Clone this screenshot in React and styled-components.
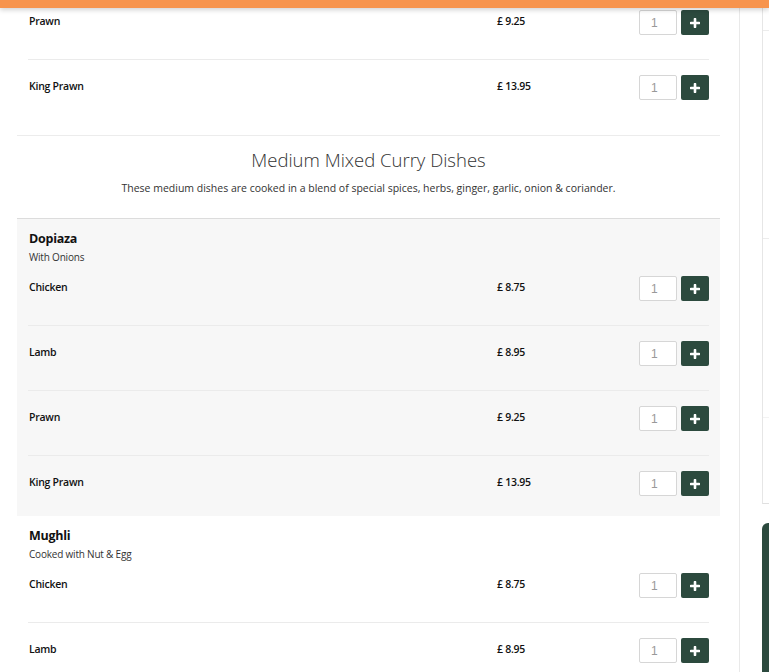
import React from "react";
import styled, { createGlobalStyle } from "styled-components";

const Global = createGlobalStyle`
  html, body { margin: 0; padding: 0; background: #fff; overflow: hidden; }
  body { font-family: "Open Sans", "Noto Sans", Arial, sans-serif; color: #222; }
  * { box-sizing: border-box; }
`;

const TopBar = styled.div`
  position: fixed;
  top: 0;
  left: 0;
  right: 0;
  height: 8px;
  background: #f7944d;
  box-shadow: 0 2px 5px rgba(0, 0, 0, 0.18);
  z-index: 10;
`;

const Page = styled.div`
  display: flex;
  width: 900px;
  height: 672px;
  overflow: hidden;
`;

const Main = styled.main`
  width: 740px;
  flex: none;
  padding: 0 19px 0 17px;
  border-right: 1px solid #e9e9e9;
`;

const Menu = styled.div`
  margin-top: -5px;
`;

const Group = styled.section`
  background: ${(p) => (p.$shaded ? "#f7f7f7" : "transparent")};
  padding: ${(p) => (p.$header ? "11px 0 1px" : "0")};
`;

const GroupTitle = styled.h3`
  margin: 0 12px;
  font-size: 12.5px;
  font-weight: 700;
  line-height: 18px;
  letter-spacing: -0.25px;
  color: #111;
`;

const GroupNote = styled.p`
  margin: 4px 12px -2px;
  font-size: 10px;
  line-height: 11px;
  letter-spacing: -0.2px;
  color: #333;
`;

const Row = styled.div`
  display: grid;
  grid-template-columns: 1fr 142px 70px;
  align-items: start;
  margin: 0 11px 0 11px;
  padding: 15px 0 19px 1px;
  & + & {
    margin-top: 5px;
    border-top: 1px solid #ebebeb;
  }
`;

const Name = styled.div`
  padding-top: 3px;
  font-size: 10.5px;
  font-weight: 600;
  line-height: 16px;
  letter-spacing: -0.25px;
  color: #111;
`;

const Price = styled(Name)``;

const Controls = styled.div`
  display: flex;
  gap: 4px;
`;

const Qty = styled.input`
  width: 38px;
  height: 25px;
  border: 1px solid #d6d6d6;
  border-radius: 2px;
  padding: 0 0 0 11px;
  font-family: "Liberation Sans", Arial, sans-serif;
  font-size: 12px;
  color: #999;
  background: #fff;
  outline: none;
`;

const AddButton = styled.button`
  width: 28px;
  height: 25px;
  border: none;
  border-radius: 2px;
  background: #2c4a3e;
  display: flex;
  align-items: center;
  justify-content: center;
  padding: 0;
  cursor: pointer;
`;

const SectionHead = styled.header`
  margin-top: 16px;
  border-top: 1px solid #ececec;
  border-bottom: 1px solid #dcdcdc;
  padding: 13px 0 23px;
  text-align: center;
`;

const SectionTitle = styled.h2`
  margin: 0;
  font-size: 18.5px;
  font-weight: 300;
  line-height: 22px;
  color: #333;
`;

const SectionNote = styled.p`
  margin: 10px 0 0;
  font-size: 10.5px;
  line-height: 14px;
  color: #333;
`;

const Side = styled.aside`
  flex: 1;
  padding-left: 22px;
  display: flex;
  flex-direction: column;
`;

const Basket = styled.div`
  height: 504px;
  border-left: 1px solid #e6e6e6;
  border-bottom: 1px solid #e0e0e0;
  display: flex;
  flex-direction: column;
`;

const BasketSlot = styled.div`
  height: ${(p) => p.$h}px;
  border-bottom: 1px solid ${(p) => p.$line || "#ececec"};
  flex: none;
`;

const CheckoutPanel = styled.div`
  margin-top: 19px;
  flex: 1;
  background: #2c4a3e;
  border-radius: 6px 0 0 0;
`;

const Plus = () => (
  <svg width="10" height="10" viewBox="0 0 10 10">
    <path d="M5 1v8M1 5h8" stroke="#fff" strokeWidth="2.6" strokeLinecap="round" />
  </svg>
);

const Item = ({ name, price }) => (
  <Row>
    <Name>{name}</Name>
    <Price>£ {price}</Price>
    <Controls>
      <Qty defaultValue="1" />
      <AddButton aria-label={`Add ${name}`}>
        <Plus />
      </AddButton>
    </Controls>
  </Row>
);

const variants = [
  ["Chicken", "8.75"],
  ["Lamb", "8.95"],
  ["Prawn", "9.25"],
  ["King Prawn", "13.95"],
];

export default function App() {
  return (
    <>
      <Global />
      <TopBar />
      <Page>
        <Main>
          <Menu>
            <Group>
              <Item name="Prawn" price="9.25" />
              <Item name="King Prawn" price="13.95" />
            </Group>

            <SectionHead>
              <SectionTitle>Medium Mixed Curry Dishes</SectionTitle>
              <SectionNote>
                These medium dishes are cooked in a blend of special spices, herbs, ginger, garlic, onion &amp; coriander.
              </SectionNote>
            </SectionHead>

            <Group $shaded $header>
              <GroupTitle>Dopiaza</GroupTitle>
              <GroupNote>With Onions</GroupNote>
              {variants.map(([n, p]) => (
                <Item key={n} name={n} price={p} />
              ))}
            </Group>

            <Group $header>
              <GroupTitle>Mughli</GroupTitle>
              <GroupNote>Cooked with Nut &amp; Egg</GroupNote>
              {variants.slice(0, 2).map(([n, p]) => (
                <Item key={n} name={n} price={p} />
              ))}
            </Group>
          </Menu>
        </Main>
        <Side>
          <Basket>
            <BasketSlot $h={31} />
            <BasketSlot $h={208} />
            <BasketSlot $h={179} $line="#f3f3f3" />
          </Basket>
          <CheckoutPanel />
        </Side>
      </Page>
    </>
  );
}
